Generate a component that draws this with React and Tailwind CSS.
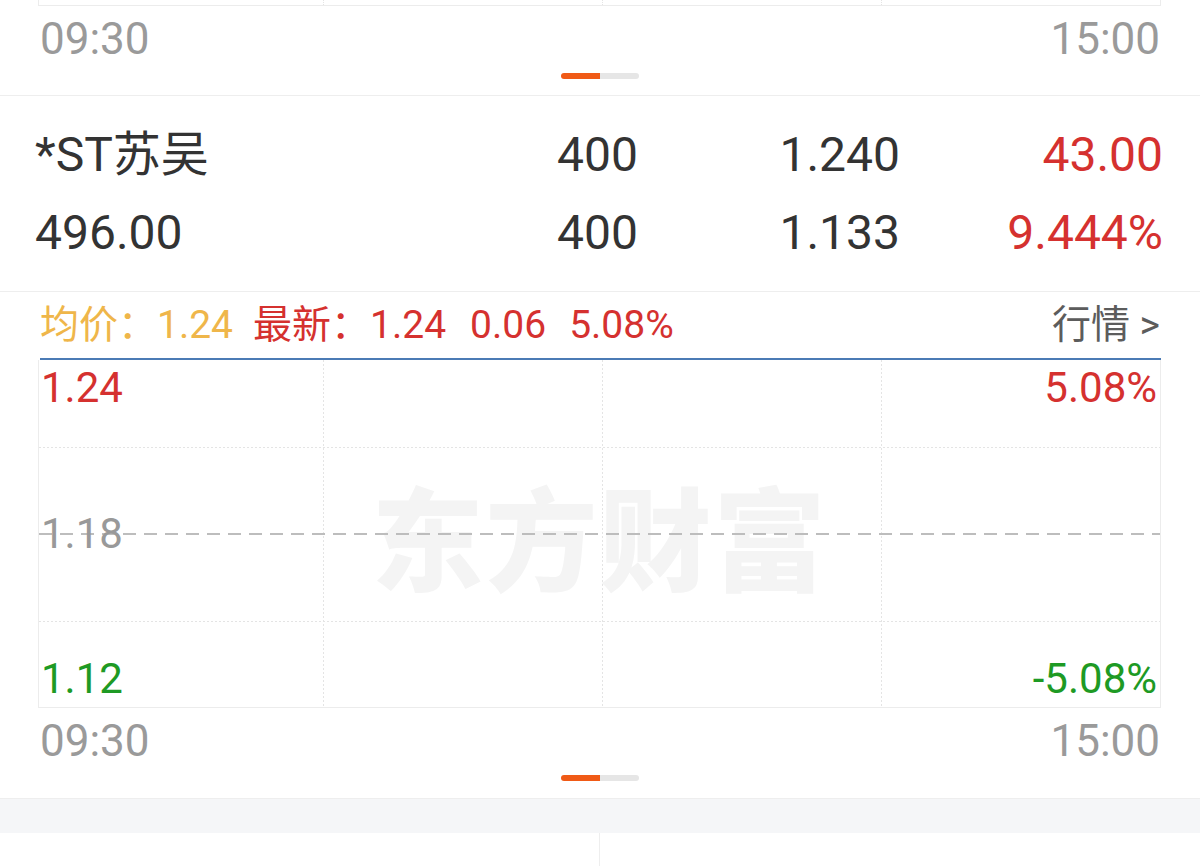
const FONT = "font-['Roboto','Noto_Sans_CJK_SC',sans-serif]"

const RED = 'text-[#d5312f]'
const GREEN = 'text-[#1e9a24]'

function Pager() {
  return (
    <div className="flex justify-center">
      <div className="h-[6px] w-[39px] rounded-l-full bg-[#f05a16]" />
      <div className="h-[6px] w-[39px] rounded-r-full bg-[#e6e6e6]" />
    </div>
  )
}

function TimeAxis() {
  return (
    <div className="flex h-[50px] items-center justify-between pl-[40px] pr-[40px] text-[44px] leading-none text-[#9a9a9a]">
      <span>09:30</span>
      <span>15:00</span>
    </div>
  )
}

function Grid() {
  const W = 1121
  const H = 347
  return (
    <svg className="block" width={W} height={H} viewBox={`0 0 ${W} ${H}`}>
      {[284, 563, 842].map((x) => (
        <line key={x} x1={x + 0.5} y1={0} x2={x + 0.5} y2={H} stroke="#e4e4e4" strokeWidth="1" strokeDasharray="2 2" />
      ))}
      {[87, 261].map((y) => (
        <line key={y} x1={0} y1={y + 0.5} x2={W} y2={y + 0.5} stroke="#e4e4e4" strokeWidth="1" strokeDasharray="2 2" />
      ))}
    </svg>
  )
}

const rows = [
  ['*ST苏吴', '400', '1.240', '43.00'],
  ['496.00', '400', '1.133', '9.444%'],
]

export default function App() {
  return (
    <div className={`w-[1200px] h-[866px] overflow-hidden bg-white ${FONT}`}>
      {/* previous chart tail */}
      <div className="border-b border-[#eeeeee] pb-[16px]">
        <div className="ml-[38px] mr-[39px] grid h-[6px] grid-cols-[285px_279px_279px_1fr] border-x border-b border-[#ececec]">
          <div className="border-r border-dotted border-[#e4e4e4]" />
          <div className="border-r border-dotted border-[#e4e4e4]" />
          <div className="border-r border-dotted border-[#e4e4e4]" />
          <div />
        </div>
        <div className="mt-[8px]">
          <TimeAxis />
        </div>
        <div className="mt-[9px]">
          <Pager />
        </div>
      </div>

      {/* stock info */}
      <div className="border-b border-[#eeeeee] pt-[20px] pb-[19px] pl-[35px]">
        {rows.map((r, i) => (
          <div key={i} className="grid h-[78px] grid-cols-[340px_263px_262px_263px] items-center text-[48px] leading-none text-[#333333]">
            <span>{r[0]}</span>
            <span className="text-right">{r[1]}</span>
            <span className="text-right">{r[2]}</span>
            <span className={`text-right ${RED}`}>{r[3]}</span>
          </div>
        ))}
      </div>

      {/* intraday chart */}
      <div className="border-b border-[#eeeeee] pb-[17px]">
        <div className="flex h-[66px] items-center justify-between pl-[40px] pr-[40px] text-[39px] leading-none">
          <div className="flex items-center">
            <span className="text-[#efb64a]">均价：1.24</span>
            <span className={`ml-[20px] ${RED}`}>最新：1.24</span>
            <span className={`ml-[24px] ${RED}`}>0.06</span>
            <span className={`ml-[23px] ${RED}`}>5.08%</span>
          </div>
          <span className="text-[#5c5c5c]">行情 &gt;</span>
        </div>
        <div className="ml-[40px] mr-[39px] h-[2px] bg-[#4b7bb5]" />
        <div className="relative ml-[38px] mr-[39px] h-[348px] border border-t-0 border-[#ececec]">
          <Grid />
          <div className="absolute inset-0 flex items-center justify-center">
            <span className="text-[112px] font-black leading-none tracking-[2px] text-[#f4f4f4] font-['Noto_Sans_CJK_SC',sans-serif]">东方财富</span>
          </div>
          <svg className="absolute left-0 top-0" width="1121" height="347" viewBox="0 0 1121 347">
            <line x1={0} y1={174} x2={1121} y2={174} stroke="#bdbdbd" strokeWidth="2" strokeDasharray="13 8" />
          </svg>
          <div className="absolute inset-0 flex flex-col justify-between py-[5px] pl-[2px] pr-[3px] text-[42px] leading-[46px]">
            <div className="flex justify-between">
              <span className={RED}>1.24</span>
              <span className={RED}>5.08%</span>
            </div>
            <div className="flex justify-between">
              <span className="text-[#999999]">1.18</span>
            </div>
            <div className="flex justify-between">
              <span className={GREEN}>1.12</span>
              <span className={GREEN}>-5.08%</span>
            </div>
          </div>
        </div>
        <div className="mt-[8px]">
          <TimeAxis />
        </div>
        <div className="mt-[9px]">
          <Pager />
        </div>
      </div>

      <div className="h-[34px] bg-[#f5f6f8]" />
      <div className="grid h-[40px] grid-cols-2">
        <div className="border-r border-[#eeeeee]" />
        <div />
      </div>
    </div>
  )
}
